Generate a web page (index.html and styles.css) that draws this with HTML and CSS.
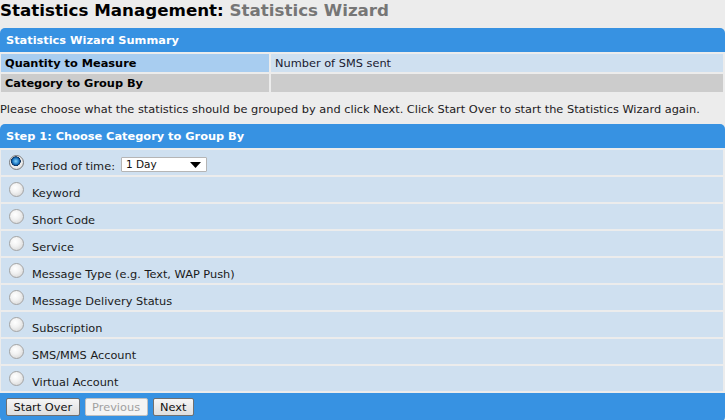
FILE: index.html
```html
<!DOCTYPE html>
<html>
<head>
<meta charset="utf-8">
<link rel="stylesheet" href="styles.css">
</head>
<body>
<h1 class="title">Statistics Management: <span class="sub">Statistics Wizard</span></h1>

<section class="panel summary">
  <div class="panel-head">Statistics Wizard Summary</div>
  <div class="sum-row">
    <div class="sum-label blue">Quantity to Measure</div>
    <div class="sum-value blue">Number of SMS sent</div>
  </div>
  <div class="sum-row">
    <div class="sum-label grey">Category to Group By</div>
    <div class="sum-value grey"></div>
  </div>
</section>

<p class="intro">Please choose what the statistics should be grouped by and click Next. Click Start Over to start the Statistics Wizard again.</p>

<section class="panel step">
  <div class="panel-head">Step 1: Choose Category to Group By</div>
  <div class="opts">
    <label class="opt"><input type="radio" name="g" checked><span>Period of time:</span>
      <span class="sel"><select><option>1 Day</option></select><svg class="arrow" width="11" height="6" viewBox="0 0 11 6"><path d="M0 0H11L5.5 6Z" fill="#000"/></svg></span>
    </label>
    <label class="opt"><input type="radio" name="g"><span>Keyword</span></label>
    <label class="opt"><input type="radio" name="g"><span>Short Code</span></label>
    <label class="opt"><input type="radio" name="g"><span>Service</span></label>
    <label class="opt"><input type="radio" name="g"><span>Message Type (e.g. Text, WAP Push)</span></label>
    <label class="opt"><input type="radio" name="g"><span>Message Delivery Status</span></label>
    <label class="opt"><input type="radio" name="g"><span>Subscription</span></label>
    <label class="opt"><input type="radio" name="g"><span>SMS/MMS Account</span></label>
    <label class="opt"><input type="radio" name="g"><span>Virtual Account</span></label>
  </div>
  <div class="panel-foot">
    <button class="btn">Start Over</button>
    <button class="btn" disabled>Previous</button>
    <button class="btn">Next</button>
  </div>
</section>
</body>
</html>
```

FILE: styles.css
```css
html, body {
  margin: 0;
  padding: 0;
  background: #ececec;
  font-family: "DejaVu Sans", Verdana, sans-serif;
  font-size: 11.35px;
  color: #1a1a1a;
  overflow: hidden;
}

.title {
  margin: 0;
  font-size: 16.7px;
  font-weight: bold;
  line-height: 21px;
  height: 28px;
  color: #000;
}
.title .sub { color: #767676; }

.panel-head {
  background: #3792e2;
  color: #fff;
  font-weight: bold;
  height: 24px;
  line-height: 24px;
  padding-left: 6px;
  border-radius: 5px 5px 0 0;
}

.sum-row {
  display: grid;
  grid-template-columns: 268px 1fr;
  column-gap: 2px;
  padding: 0 2px 0 1px;
  margin-top: 2px;
}
.sum-label, .sum-value {
  height: 18px;
  line-height: 19px;
  padding-left: 4px;
}
.sum-label { font-weight: bold; color: #000; }
.sum-label.blue { background: #a8cdf0; }
.sum-value.blue { background: #cfe0f0; color: #1a1a30; }
.grey { background: #cccccc; }

.intro {
  margin: 8px 0 0;
  height: 24px;
  line-height: 18px;
  color: #1c1a22;
}

.opts {
  display: flex;
  flex-direction: column;
  gap: 2px;
  padding: 2px 2px 2px 1px;
}
.opt {
  display: flex;
  align-items: center;
  height: 25px;
  background: #cfe0f0;
  padding-left: 8px;
  gap: 8px;
}
.opt span { padding-top: 6px; }

.opt input {
  appearance: none;
  -webkit-appearance: none;
  margin: 0;
  width: 15px;
  height: 15px;
  border-radius: 50%;
  border: 1px solid #a4a4a4;
  background: radial-gradient(circle at 40% 35%, #ffffff 0%, #f2f2f2 40%, #cfcfcf 100%);
  box-sizing: border-box;
  flex: none;
}
.opt input:checked {
  background:
    radial-gradient(circle at 45% 40%, #8ad6fa 0%, #1b77c4 30%, #0b2f5a 44%, rgba(0,0,0,0) 48%),
    radial-gradient(circle at 40% 35%, #ffffff 0%, #ececec 60%, #c8c8c8 100%);
  border-color: #7b7b7b;
}

.sel {
  position: relative;
  display: inline-block;
  margin-left: -2px;
  padding-top: 3px !important;
}
.sel select {
  appearance: none;
  -webkit-appearance: none;
  width: 86px;
  height: 15px;
  border: 1px solid #b5b5b5;
  border-radius: 1px;
  background: #fff;
  font-family: "DejaVu Sans", Verdana, sans-serif;
  font-size: 10.5px;
  padding: 0 0 0 4px;
  color: #111;
  display: block;
}
.sel .arrow {
  position: absolute;
  right: 6px;
  top: 8px;
  pointer-events: none;
}

.panel-foot {
  background: #3792e2;
  height: 29px;
  border-radius: 0 0 5px 5px;
  display: flex;
  align-items: center;
  gap: 5px;
  padding-left: 6px;
}
.btn {
  font-family: "DejaVu Sans", Verdana, sans-serif;
  font-size: 11.35px;
  height: 18px;
  padding: 0 6.5px;
  border: 1px solid #707070;
  border-radius: 2px;
  background: linear-gradient(#f6f6f6, #dedede);
  color: #111;
  margin-top: -2px;
}
.btn:disabled {
  border-color: #c0c0c0;
  background: #f4f4f4;
  color: #a0a0a0;
}
```
